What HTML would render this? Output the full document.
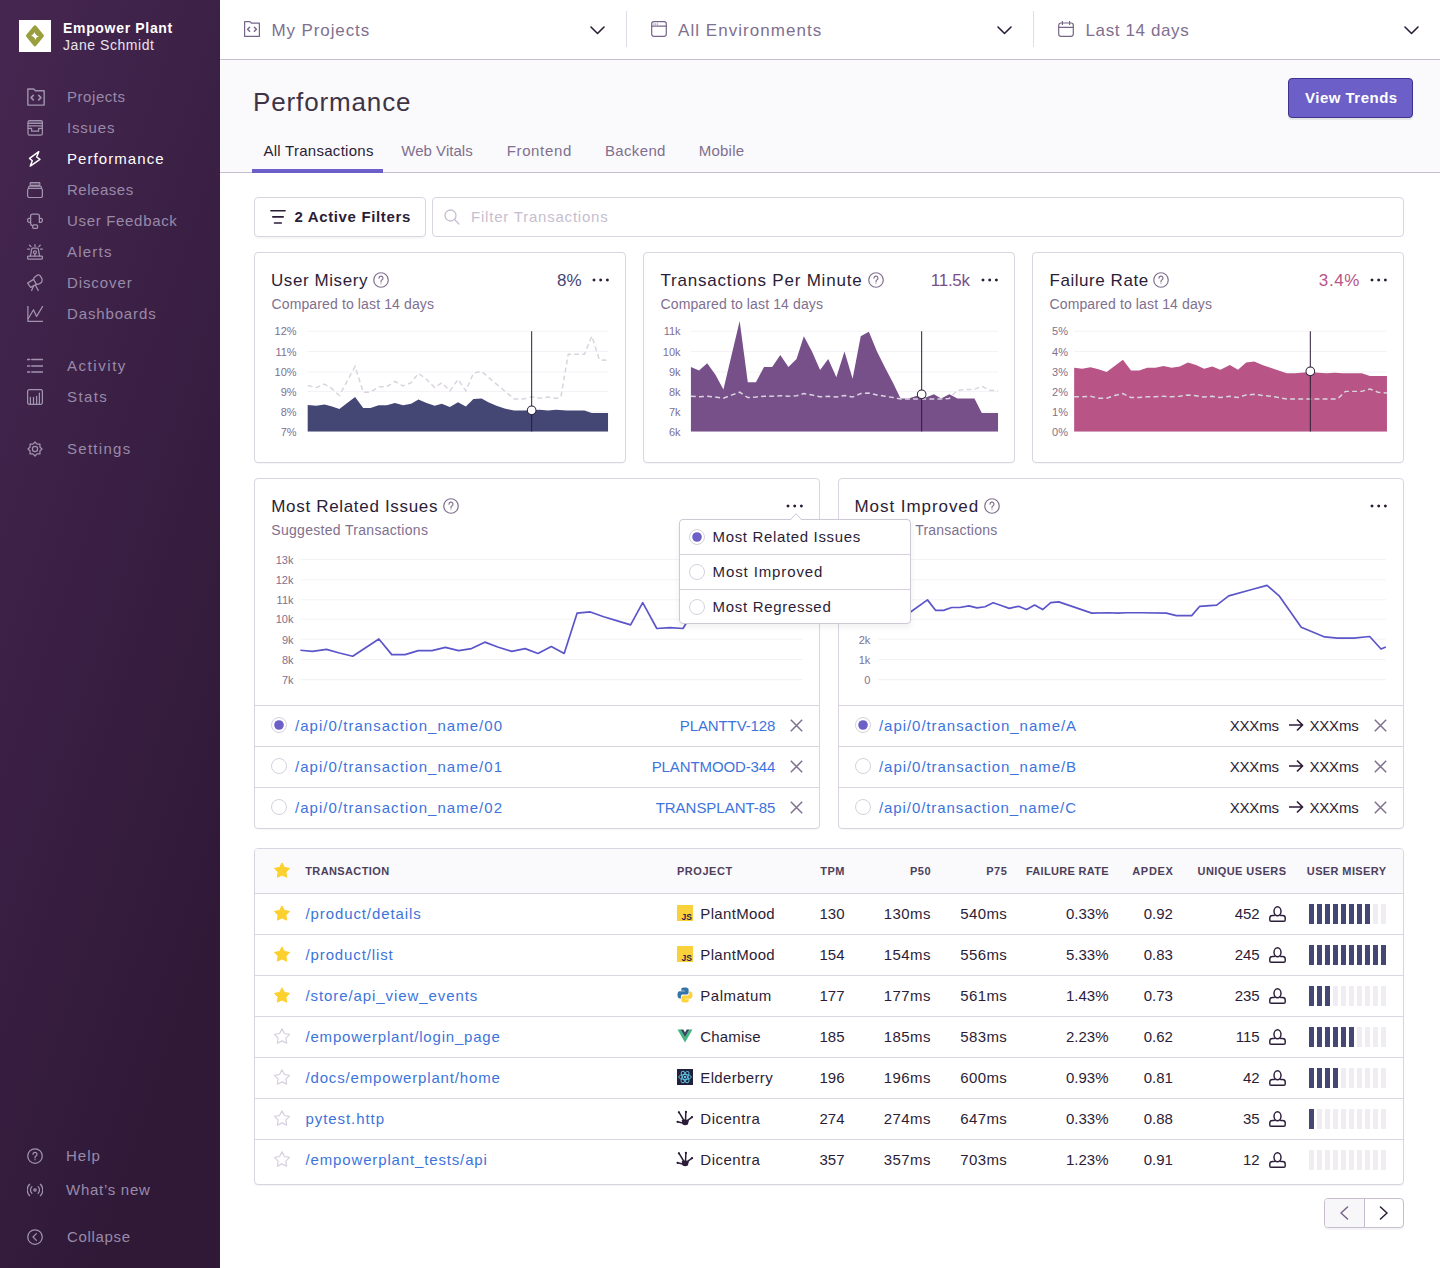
<!DOCTYPE html>
<html><head><meta charset="utf-8"><style>
*{box-sizing:border-box;margin:0;padding:0}
html,body{width:1440px;height:1268px;overflow:hidden;background:#fff;font-family:"Liberation Sans",sans-serif;color:#2b1d38}
.abs{position:absolute}
.t{position:absolute;white-space:nowrap}
</style></head><body>
<div class="abs" style="left:0;top:0;width:220px;height:1268px;background:linear-gradient(288.7deg,#2f1937 17.1%,#452650 98.3%)"></div>
<svg class="abs" style="left:19px;top:20px;width:32px;height:32px" viewBox="0 0 32 32"><rect width="32" height="32" fill="#fff"/><polygon points="15.9,6.9 23.3,15.75 15.9,24.8 8.6,15.75" fill="#9a9e3f" stroke="#9a9e3f" stroke-width="3.2" stroke-linejoin="round"/><path d="M15.5 12Q15.9 14.8 19.9 16.6Q17 17 16.5 20.2Q16 17.4 12.2 15.5Q15 15 15.5 12Z" fill="#fff"/></svg>
<div class="t" style="left:63px;top:19.15px;font-size:14px;line-height:18px;color:#fff;font-weight:bold;letter-spacing:0.678px;">Empower Plant</div>
<div class="t" style="left:63px;top:36.15px;font-size:14px;line-height:18px;color:#e9e2ee;letter-spacing:0.559px;">Jane Schmidt</div>
<div class="t" style="left:67px;top:86.80px;font-size:15px;line-height:20px;color:#998aa9;letter-spacing:0.552px;">Projects</div>
<div class="t" style="left:67px;top:117.80px;font-size:15px;line-height:20px;color:#998aa9;letter-spacing:0.818px;">Issues</div>
<div class="t" style="left:67px;top:148.80px;font-size:15px;line-height:20px;color:#fff;letter-spacing:1.067px;">Performance</div>
<div class="t" style="left:67px;top:179.80px;font-size:15px;line-height:20px;color:#998aa9;letter-spacing:0.515px;">Releases</div>
<div class="t" style="left:67px;top:210.80px;font-size:15px;line-height:20px;color:#998aa9;letter-spacing:0.678px;">User Feedback</div>
<div class="t" style="left:67px;top:241.80px;font-size:15px;line-height:20px;color:#998aa9;letter-spacing:1.221px;">Alerts</div>
<div class="t" style="left:67px;top:272.80px;font-size:15px;line-height:20px;color:#998aa9;letter-spacing:0.899px;">Discover</div>
<div class="t" style="left:67px;top:303.80px;font-size:15px;line-height:20px;color:#998aa9;letter-spacing:0.862px;">Dashboards</div>
<div class="t" style="left:67px;top:355.80px;font-size:15px;line-height:20px;color:#998aa9;letter-spacing:1.548px;">Activity</div>
<div class="t" style="left:67px;top:386.80px;font-size:15px;line-height:20px;color:#998aa9;letter-spacing:1.416px;">Stats</div>
<div class="t" style="left:67px;top:438.80px;font-size:15px;line-height:20px;color:#998aa9;letter-spacing:1.278px;">Settings</div>
<div class="t" style="left:66px;top:1145.80px;font-size:15px;line-height:20px;color:#998aa9;letter-spacing:0.980px;">Help</div>
<div class="t" style="left:66px;top:1179.80px;font-size:15px;line-height:20px;color:#998aa9;letter-spacing:0.726px;">What’s new</div>
<div class="t" style="left:67px;top:1226.80px;font-size:15px;line-height:20px;color:#998aa9;letter-spacing:0.668px;">Collapse</div>
<svg class="abs" style="left:27px;top:88px;width:18px;height:18px" viewBox="0 0 16 16"><path d="M0.75 0.9h5.2l1.6 1.6h7.7v12.7H0.75z" fill="none" stroke="#a194ae" stroke-width="1.25" stroke-linecap="round" stroke-linejoin="round"/><path d="M5.6 6.6L3.6 8.6l2 2M10.4 6.6l2 2-2 2" fill="none" stroke="#a194ae" stroke-width="1.4" stroke-linecap="round" stroke-linejoin="round"/></svg>
<svg class="abs" style="left:27px;top:120px;width:16px;height:16px" viewBox="0 0 16 16"><rect x="1" y="0.6" width="14.4" height="14.6" rx="1.6" fill="none" stroke="#a194ae" stroke-width="1.25" stroke-linecap="round" stroke-linejoin="round"/><rect x="1.6" y="1.2" width="13.2" height="2.2" fill="#a194ae" opacity="0.35"/><path d="M1 3.4h14.4M1 5.9h14.4M1 8.3h3.6v2.9h7V8.3h3.8" fill="none" stroke="#a194ae" stroke-width="1.25" stroke-linecap="round" stroke-linejoin="round"/></svg>
<svg class="abs" style="left:28px;top:151px;width:14px;height:16px" viewBox="0 0 14 16"><path d="M10.76 0.65L1.56 7.4L4.3 9.8L2.25 15.05L11.97 8.3L8.67 6Z" fill="none" stroke="#fff" stroke-width="1.45" stroke-linecap="round" stroke-linejoin="round"/></svg>
<svg class="abs" style="left:27px;top:182px;width:16px;height:16px" viewBox="0 0 16 16"><rect x="3.2" y="0.5" width="9.6" height="3.1" rx="0.8" fill="none" stroke="#a194ae" stroke-width="1.25" stroke-linecap="round" stroke-linejoin="round"/><rect x="3.8" y="1.1" width="8.4" height="1.9" fill="#a194ae" opacity="0.35"/><path d="M1.6 6.3V5.2q0-1.2 1.2-1.2h10.4q1.2 0 1.2 1.2v1.1" fill="none" stroke="#a194ae" stroke-width="1.25" stroke-linecap="round" stroke-linejoin="round"/><rect x="0.6" y="6.3" width="14.8" height="9.2" rx="1.8" fill="none" stroke="#a194ae" stroke-width="1.25" stroke-linecap="round" stroke-linejoin="round"/></svg>
<svg class="abs" style="left:27px;top:213px;width:16px;height:16px" viewBox="0 0 16 16"><path d="M3.6 10.6V3.3Q3.6 1.2 5.7 1.2h4.6q2.1 0 2.1 2.1v6.1" fill="none" stroke="#a194ae" stroke-width="1.25" stroke-linecap="round" stroke-linejoin="round"/><path d="M3.6 5.3H2Q0.6 5.3 0.6 7.3T2 9.4h1.6M12.4 5.3H14q1.4 0 1.4 2T14 9.4h-1.6" fill="none" stroke="#a194ae" stroke-width="1.25" stroke-linecap="round" stroke-linejoin="round"/><path d="M3.6 10.6q0 2 2.1 2" fill="none" stroke="#a194ae" stroke-width="1.25" stroke-linecap="round" stroke-linejoin="round"/><rect x="5.7" y="11.8" width="4.9" height="3.6" rx="1.2" fill="none" stroke="#a194ae" stroke-width="1.25" stroke-linecap="round" stroke-linejoin="round"/></svg>
<svg class="abs" style="left:27px;top:243px;width:16px;height:17px" viewBox="0 0 16 17"><rect x="0.6" y="13" width="14.8" height="3.2" rx="1" fill="none" stroke="#a194ae" stroke-width="1.25" stroke-linecap="round" stroke-linejoin="round"/><path d="M3.4 13L4.7 6.1q0.2-0.9 1.1-0.9h4.4q0.9 0 1.1 0.9L12.6 13" fill="none" stroke="#a194ae" stroke-width="1.25" stroke-linecap="round" stroke-linejoin="round"/><circle cx="7.9" cy="9.3" r="1.5" fill="none" stroke="#a194ae" stroke-width="1.25" stroke-linecap="round" stroke-linejoin="round"/><path d="M7.9 10.8V13M0.6 6H2.5M13.5 6h1.9M2.6 2.2L4 3.6M8 1.5V3.6M13.2 2.2L11.8 3.6" fill="none" stroke="#a194ae" stroke-width="1.25" stroke-linecap="round" stroke-linejoin="round"/></svg>
<svg class="abs" style="left:27px;top:274px;width:16px;height:17px" viewBox="0 0 16 17"><path d="M0.6 9.1L6.5 5.4L9.4 10.4L3.6 13.4Z" fill="none" stroke="#a194ae" stroke-width="1.25" stroke-linecap="round" stroke-linejoin="round"/><path d="M6.5 5.4L7.2 3.6L10.6 1.1Q11.8 0.5 12.8 1.4L14.8 4.4Q15.5 5.8 14.6 8.4L11.6 10.2L9.4 10.4" fill="none" stroke="#a194ae" stroke-width="1.25" stroke-linecap="round" stroke-linejoin="round"/><path d="M6.6 12L4.6 16.4M8.5 11.2L11.2 16.4" fill="none" stroke="#a194ae" stroke-width="1.25" stroke-linecap="round" stroke-linejoin="round"/></svg>
<svg class="abs" style="left:27px;top:306px;width:16px;height:16px" viewBox="0 0 16 16"><path d="M0.9 0.3V15.3H15.7" fill="none" stroke="#a194ae" stroke-width="1.25" stroke-linecap="round" stroke-linejoin="round"/><path d="M1.2 12.8L6.5 3.8L9.6 10.4L15.5 0.5" fill="none" stroke="#a194ae" stroke-width="1.25" stroke-linecap="round" stroke-linejoin="round"/></svg>
<svg class="abs" style="left:27px;top:358px;width:16px;height:16px" viewBox="0 0 16 16"><path d="M4.8 1.6h10.8M4.8 7.9h10.8M4.8 14.1h10.8" fill="none" stroke="#a194ae" stroke-width="1.5" stroke-linecap="round" stroke-linejoin="round"/><path d="M0.5 1.6h2.2M0.5 7.9h2.2M0.5 14.1h2.2" fill="none" stroke="#a194ae" stroke-width="1.5" stroke-linecap="round" stroke-linejoin="round"/></svg>
<svg class="abs" style="left:27px;top:389px;width:16px;height:16px" viewBox="0 0 16 16"><rect x="0.6" y="0.6" width="14.8" height="14.8" rx="1.8" fill="none" stroke="#a194ae" stroke-width="1.25" stroke-linecap="round" stroke-linejoin="round"/><path d="M3.4 15.3V8.3M6.5 15.3V8.3M9.6 15.3V7.3M12.4 15.3V4.2" fill="none" stroke="#a194ae" stroke-width="1.25" stroke-linecap="round" stroke-linejoin="round"/></svg>
<svg class="abs" style="left:27px;top:441px;width:16px;height:16px" viewBox="0 0 16 16"><polygon points="8.00,1.00 10.03,3.10 12.95,3.05 12.90,5.97 15.00,8.00 12.90,10.03 12.95,12.95 10.03,12.90 8.00,15.00 5.97,12.90 3.05,12.95 3.10,10.03 1.00,8.00 3.10,5.97 3.05,3.05 5.97,3.10" fill="none" stroke="#a194ae" stroke-width="1.25" stroke-linecap="round" stroke-linejoin="round"/><circle cx="8" cy="8" r="2.6" fill="none" stroke="#a194ae" stroke-width="1.25" stroke-linecap="round" stroke-linejoin="round"/></svg>
<svg class="abs" style="left:27px;top:1148px;width:16px;height:16px" viewBox="0 0 16 16"><circle cx="8" cy="8" r="7.25" fill="none" stroke="#a194ae" stroke-width="1.25" stroke-linecap="round" stroke-linejoin="round"/><path d="M6 6.3a2 2 0 1 1 2.8 1.8c-.6.3-.8.7-.8 1.3v.5" fill="none" stroke="#a194ae" stroke-width="1.25" stroke-linecap="round" stroke-linejoin="round"/><circle cx="8" cy="11.8" r="0.4" fill="#a194ae" stroke="#a194ae" stroke-width="0.6"/></svg>
<svg class="abs" style="left:27px;top:1182px;width:16px;height:16px" viewBox="0 0 16 16"><circle cx="8" cy="8" r="1.2" fill="none" stroke="#a194ae" stroke-width="1.25" stroke-linecap="round" stroke-linejoin="round"/><path d="M4.9 4.6a4.8 4.8 0 0 0 0 6.8M11.1 4.6a4.8 4.8 0 0 1 0 6.8M2.6 2.3a8 8 0 0 0 0 11.4M13.4 2.3a8 8 0 0 1 0 11.4" fill="none" stroke="#a194ae" stroke-width="1.25" stroke-linecap="round" stroke-linejoin="round"/></svg>
<svg class="abs" style="left:27px;top:1229px;width:16px;height:16px" viewBox="0 0 16 16"><circle cx="8" cy="8" r="7.25" fill="none" stroke="#a194ae" stroke-width="1.25" stroke-linecap="round" stroke-linejoin="round"/><path d="M9.4 4.6L6 8l3.4 3.4" fill="none" stroke="#a194ae" stroke-width="1.25" stroke-linecap="round" stroke-linejoin="round"/></svg>
<div class="abs" style="left:220px;top:0px;width:1220px;height:60px;background:#fff;border-bottom:1px solid #c6becf"></div>
<div class="t" style="left:271.5px;top:19.51px;font-size:17px;line-height:22px;color:#80708f;letter-spacing:0.889px;">My Projects</div>
<div class="t" style="left:678px;top:19.51px;font-size:17px;line-height:22px;color:#80708f;letter-spacing:1.042px;">All Environments</div>
<div class="t" style="left:1085.5px;top:19.51px;font-size:17px;line-height:22px;color:#80708f;letter-spacing:0.617px;">Last 14 days</div>
<svg class="abs" style="left:244px;top:21px;width:16px;height:16px" viewBox="0 0 16 16"><path d="M0.6 0.6h5.3l1.7 1.6h7.8v13.2H0.6z" fill="none" stroke="#776589" stroke-width="1.2" stroke-linecap="round" stroke-linejoin="round"/><path d="M5.6 6.2L3.6 8.2l2 2M10.4 6.2l2 2-2 2" fill="none" stroke="#776589" stroke-width="1.4" stroke-linecap="round" stroke-linejoin="round"/></svg>
<svg class="abs" style="left:651px;top:21px;width:16px;height:16px" viewBox="0 0 16 16"><rect x="0.7" y="0.7" width="14.6" height="14.6" rx="2.2" fill="none" stroke="#776589" stroke-width="1.2" stroke-linecap="round" stroke-linejoin="round"/><path d="M0.7 5.2h14.6" fill="none" stroke="#776589" stroke-width="1.2" stroke-linecap="round" stroke-linejoin="round"/><path d="M2.8 3h.2M4.6 3h.2M6.4 3h.2" fill="none" stroke="#776589" stroke-width="1.1" stroke-linecap="round" stroke-linejoin="round"/></svg>
<svg class="abs" style="left:1058px;top:21px;width:16px;height:16px" viewBox="0 0 16 16"><rect x="0.7" y="2" width="14.6" height="13.3" rx="2.2" fill="none" stroke="#776589" stroke-width="1.2" stroke-linecap="round" stroke-linejoin="round"/><path d="M0.7 6.3h14.6M4.4 0.5v3M11.6 0.5v3" fill="none" stroke="#776589" stroke-width="1.2" stroke-linecap="round" stroke-linejoin="round"/></svg>
<svg class="abs" style="left:590px;top:26px;width:15px;height:9px" viewBox="0 0 15 9"><path d="M1 1l6.5 6.5L14 1" fill="none" stroke="#2b1d38" stroke-width="1.6" stroke-linecap="round" stroke-linejoin="round"/></svg>
<svg class="abs" style="left:997px;top:26px;width:15px;height:9px" viewBox="0 0 15 9"><path d="M1 1l6.5 6.5L14 1" fill="none" stroke="#2b1d38" stroke-width="1.6" stroke-linecap="round" stroke-linejoin="round"/></svg>
<svg class="abs" style="left:1404px;top:26px;width:15px;height:9px" viewBox="0 0 15 9"><path d="M1 1l6.5 6.5L14 1" fill="none" stroke="#2b1d38" stroke-width="1.6" stroke-linecap="round" stroke-linejoin="round"/></svg>
<div class="abs" style="left:626px;top:11px;width:1px;height:36px;background:#e0dce5"></div>
<div class="abs" style="left:1033px;top:11px;width:1px;height:36px;background:#e0dce5"></div>
<div class="abs" style="left:220px;top:60px;width:1220px;height:113px;background:#faf9fb;border-bottom:1px solid #c6becf"></div>
<div class="t" style="left:253px;top:85.19px;font-size:26px;line-height:34px;color:#3e3446;letter-spacing:0.868px;">Performance</div>
<div class="t" style="left:263.4px;top:140.70px;font-size:15px;line-height:20px;color:#2b1d38;letter-spacing:0.277px;">All Transactions</div>
<div class="t" style="left:401.3px;top:140.70px;font-size:15px;line-height:20px;color:#80708f;letter-spacing:0.022px;">Web Vitals</div>
<div class="t" style="left:506.7px;top:140.70px;font-size:15px;line-height:20px;color:#80708f;letter-spacing:0.643px;">Frontend</div>
<div class="t" style="left:604.9px;top:140.70px;font-size:15px;line-height:20px;color:#80708f;letter-spacing:0.362px;">Backend</div>
<div class="t" style="left:698.7px;top:140.70px;font-size:15px;line-height:20px;color:#80708f;letter-spacing:0.252px;">Mobile</div>
<div class="abs" style="left:252px;top:169px;width:131px;height:4px;background:#6c5fc7"></div>
<div class="abs" style="left:1288px;top:78px;width:125px;height:40px;background:#6c5fc7;border:1px solid #3d328e;border-radius:4px;box-shadow:0 2px 0 rgba(0,0,0,.08)"></div>
<div class="t" style="left:1305px;top:87.60px;font-size:15px;line-height:20px;color:#fff;font-weight:bold;letter-spacing:0.488px;">View Trends</div>
<div class="abs" style="left:254px;top:197px;width:172px;height:40px;background:#fff;border:1px solid #d9d4df;border-radius:4px;box-shadow:0 2px 0 rgba(0,0,0,.03)"></div>
<div class="t" style="left:294.5px;top:206.80px;font-size:15px;line-height:20px;color:#2b1d38;font-weight:bold;letter-spacing:0.639px;">2 Active Filters</div>
<div class="abs" style="left:432px;top:197px;width:972px;height:40px;background:#fff;border:1px solid #d9d4df;border-radius:4px"></div>
<div class="t" style="left:471px;top:206.80px;font-size:15px;line-height:20px;color:#c6becf;letter-spacing:0.789px;">Filter Transactions</div>
<svg class="abs" style="left:270px;top:209px;width:16px;height:16px" viewBox="0 0 16 16"><path d="M0.9 1.7h14.2M2.8 7.9h10.4M4.5 14h6.8" fill="none" stroke="#2b1d38" stroke-width="1.6" stroke-linecap="round" stroke-linejoin="round"/></svg>
<svg class="abs" style="left:444px;top:209px;width:16px;height:16px" viewBox="0 0 16 16"><circle cx="6.5" cy="6.5" r="5.5" fill="none" stroke="#c6becf" stroke-width="1.3" stroke-linecap="round" stroke-linejoin="round"/><path d="M10.5 10.5l4.5 4.5" fill="none" stroke="#c6becf" stroke-width="1.3" stroke-linecap="round" stroke-linejoin="round"/></svg>
<div class="abs" style="left:254px;top:252px;width:372px;height:211px;background:#fff;border:1px solid #d9d4df;border-radius:4px;box-shadow:0 1px 0 rgba(0,0,0,.03)"></div>
<div class="abs" style="left:643px;top:252px;width:372px;height:211px;background:#fff;border:1px solid #d9d4df;border-radius:4px;box-shadow:0 1px 0 rgba(0,0,0,.03)"></div>
<div class="abs" style="left:1032px;top:252px;width:372px;height:211px;background:#fff;border:1px solid #d9d4df;border-radius:4px;box-shadow:0 1px 0 rgba(0,0,0,.03)"></div>
<div class="t" style="left:271px;top:269.81px;font-size:17px;line-height:22px;color:#2b1d38;letter-spacing:0.572px;">User Misery</div>
<div class="t" style="left:660.5px;top:269.81px;font-size:17px;line-height:22px;color:#2b1d38;letter-spacing:0.798px;">Transactions Per Minute</div>
<div class="t" style="left:1049.5px;top:269.81px;font-size:17px;line-height:22px;color:#2b1d38;letter-spacing:0.553px;">Failure Rate</div>
<div class="t" style="left:271.5px;top:295.15px;font-size:14px;line-height:18px;color:#80708f;letter-spacing:0.128px;">Compared to last 14 days</div>
<div class="t" style="left:660.5px;top:295.15px;font-size:14px;line-height:18px;color:#80708f;letter-spacing:0.128px;">Compared to last 14 days</div>
<div class="t" style="left:1049.5px;top:295.15px;font-size:14px;line-height:18px;color:#80708f;letter-spacing:0.128px;">Compared to last 14 days</div>
<div class="t" style="left:181.50px;width:400px;text-align:right;top:269.81px;font-size:17px;line-height:22px;color:#444674;">8%</div>
<div class="t" style="left:569.72px;width:400px;text-align:right;top:269.81px;font-size:17px;line-height:22px;color:#77508a;letter-spacing:-0.285px;">11.5k</div>
<div class="t" style="left:960.15px;width:400px;text-align:right;top:269.81px;font-size:17px;line-height:22px;color:#b85586;letter-spacing:0.647px;">3.4%</div>
<svg class="abs" style="left:373px;top:272px;width:16px;height:16px" viewBox="0 0 16 16"><circle cx="8" cy="8" r="7.25" fill="none" stroke="#80708f" stroke-width="1.2" stroke-linecap="round" stroke-linejoin="round"/><path d="M6 6.2a2 2 0 1 1 2.8 1.8c-.6.3-.8.7-.8 1.3v.6" fill="none" stroke="#80708f" stroke-width="1.2" stroke-linecap="round" stroke-linejoin="round"/><circle cx="8" cy="11.8" r="0.5" fill="#80708f"/></svg>
<svg class="abs" style="left:868px;top:272px;width:16px;height:16px" viewBox="0 0 16 16"><circle cx="8" cy="8" r="7.25" fill="none" stroke="#80708f" stroke-width="1.2" stroke-linecap="round" stroke-linejoin="round"/><path d="M6 6.2a2 2 0 1 1 2.8 1.8c-.6.3-.8.7-.8 1.3v.6" fill="none" stroke="#80708f" stroke-width="1.2" stroke-linecap="round" stroke-linejoin="round"/><circle cx="8" cy="11.8" r="0.5" fill="#80708f"/></svg>
<svg class="abs" style="left:1153px;top:272px;width:16px;height:16px" viewBox="0 0 16 16"><circle cx="8" cy="8" r="7.25" fill="none" stroke="#80708f" stroke-width="1.2" stroke-linecap="round" stroke-linejoin="round"/><path d="M6 6.2a2 2 0 1 1 2.8 1.8c-.6.3-.8.7-.8 1.3v.6" fill="none" stroke="#80708f" stroke-width="1.2" stroke-linecap="round" stroke-linejoin="round"/><circle cx="8" cy="11.8" r="0.5" fill="#80708f"/></svg>
<svg class="abs" style="left:592.2px;top:278px;width:17.4px;height:4px" viewBox="0 0 17.4 4"><circle cx="2" cy="2" r="1.5" fill="#2b1d38"/><circle cx="8.7" cy="2" r="1.5" fill="#2b1d38"/><circle cx="15.4" cy="2" r="1.5" fill="#2b1d38"/></svg>
<svg class="abs" style="left:981.2px;top:278px;width:17.4px;height:4px" viewBox="0 0 17.4 4"><circle cx="2" cy="2" r="1.5" fill="#2b1d38"/><circle cx="8.7" cy="2" r="1.5" fill="#2b1d38"/><circle cx="15.4" cy="2" r="1.5" fill="#2b1d38"/></svg>
<svg class="abs" style="left:1370.2px;top:278px;width:17.4px;height:4px" viewBox="0 0 17.4 4"><circle cx="2" cy="2" r="1.5" fill="#2b1d38"/><circle cx="8.7" cy="2" r="1.5" fill="#2b1d38"/><circle cx="15.4" cy="2" r="1.5" fill="#2b1d38"/></svg>
<svg class="abs" style="left:250px;top:250px;width:390px;height:220px" viewBox="0 0 1440 812.3" preserveAspectRatio="none"><line x1="213" y1="300" x2="1322" y2="300" stroke="#f4f2f6" stroke-width="3.7"/><line x1="213" y1="375" x2="1322" y2="375" stroke="#f4f2f6" stroke-width="3.7"/><line x1="213" y1="450" x2="1322" y2="450" stroke="#f4f2f6" stroke-width="3.7"/><line x1="213" y1="522" x2="1322" y2="522" stroke="#f4f2f6" stroke-width="3.7"/><line x1="213" y1="598" x2="1322" y2="598" stroke="#f4f2f6" stroke-width="3.7"/><line x1="213" y1="670" x2="1322" y2="670" stroke="#f4f2f6" stroke-width="3.7"/><polygon points="213,670 213,572 245,575 275,570 300,577 330,587 388,543 418,583 445,583 475,573 505,573 535,565 565,573 595,568 622,552 652,565 682,575 708,568 738,580 768,562 797,578 825,550 855,548 880,562 910,575 940,585 975,593 1010,593 1040,592 1070,590 1100,593 1130,590 1170,593 1200,593 1235,593 1262,602 1322,602 1322,670" fill="#444674"/><polyline points="213,500 245,508 275,495 300,510 330,537 388,430 418,525 445,525 475,505 505,505 535,485 565,502 595,490 622,455 652,478 682,508 708,490 738,520 768,478 797,520 825,455 855,448 880,470 910,495 940,520 975,550 1010,550 1040,542 1070,547 1100,543 1130,548 1148,542 1175,385 1205,385 1235,385 1262,318 1290,405 1322,408" fill="none" stroke="#d9d4de" stroke-width="5.5" stroke-dasharray="18 12"/><line x1="1040" y1="300" x2="1040" y2="670" stroke="#2b1d38" stroke-width="3.7"/><circle cx="1040" cy="592" r="16" fill="#fff" stroke="#2b1d38" stroke-width="3.7"/></svg>
<div class="t" style="left:-103.40px;width:400px;text-align:right;top:324.44px;font-size:11px;line-height:14px;color:#80708f;">12%</div>
<div class="t" style="left:-103.40px;width:400px;text-align:right;top:344.75px;font-size:11px;line-height:14px;color:#80708f;">11%</div>
<div class="t" style="left:-103.40px;width:400px;text-align:right;top:365.06px;font-size:11px;line-height:14px;color:#80708f;">10%</div>
<div class="t" style="left:-103.40px;width:400px;text-align:right;top:384.56px;font-size:11px;line-height:14px;color:#80708f;">9%</div>
<div class="t" style="left:-103.40px;width:400px;text-align:right;top:405.15px;font-size:11px;line-height:14px;color:#80708f;">8%</div>
<div class="t" style="left:-103.40px;width:400px;text-align:right;top:424.65px;font-size:11px;line-height:14px;color:#80708f;">7%</div>
<svg class="abs" style="left:640px;top:250px;width:390px;height:220px" viewBox="0 0 1440 812.3" preserveAspectRatio="none"><line x1="188" y1="300" x2="1322" y2="300" stroke="#f4f2f6" stroke-width="3.7"/><line x1="188" y1="375" x2="1322" y2="375" stroke="#f4f2f6" stroke-width="3.7"/><line x1="188" y1="450" x2="1322" y2="450" stroke="#f4f2f6" stroke-width="3.7"/><line x1="188" y1="522" x2="1322" y2="522" stroke="#f4f2f6" stroke-width="3.7"/><line x1="188" y1="598" x2="1322" y2="598" stroke="#f4f2f6" stroke-width="3.7"/><line x1="188" y1="670" x2="1322" y2="670" stroke="#f4f2f6" stroke-width="3.7"/><polygon points="188,670 188,432 218,445 248,418 278,460 308,515 368,262 398,488 428,488 458,432 488,432 518,388 548,432 578,402 605,318 635,375 665,443 695,402 725,470 755,375 785,475 815,318 845,302 875,375 905,435 935,492 962,548 992,548 1022,538 1040,533 1055,545 1085,533 1112,548 1142,533 1172,548 1235,548 1262,602 1322,602 1322,670" fill="#77508a"/><polyline points="188,540 218,542 248,540 278,543 308,547 340,535 368,525 398,545 428,543 458,540 488,540 518,538 548,540 578,538 605,530 635,535 665,542 695,540 725,543 755,537 785,543 815,530 845,528 875,535 905,540 935,545 962,550 992,550 1040,550 1085,550 1112,550 1142,548 1172,518 1205,515 1235,515 1262,503 1290,518 1322,520" fill="none" stroke="#d9d4de" stroke-width="5.5" stroke-dasharray="18 12"/><line x1="1040" y1="300" x2="1040" y2="670" stroke="#2b1d38" stroke-width="3.7"/><circle cx="1040" cy="533" r="16" fill="#fff" stroke="#2b1d38" stroke-width="3.7"/></svg>
<div class="t" style="left:280.60px;width:400px;text-align:right;top:324.44px;font-size:11px;line-height:14px;color:#80708f;">11k</div>
<div class="t" style="left:280.60px;width:400px;text-align:right;top:344.75px;font-size:11px;line-height:14px;color:#80708f;">10k</div>
<div class="t" style="left:280.60px;width:400px;text-align:right;top:365.06px;font-size:11px;line-height:14px;color:#80708f;">9k</div>
<div class="t" style="left:280.60px;width:400px;text-align:right;top:384.56px;font-size:11px;line-height:14px;color:#80708f;">8k</div>
<div class="t" style="left:280.60px;width:400px;text-align:right;top:405.15px;font-size:11px;line-height:14px;color:#80708f;">7k</div>
<div class="t" style="left:280.60px;width:400px;text-align:right;top:424.65px;font-size:11px;line-height:14px;color:#80708f;">6k</div>
<svg class="abs" style="left:1030px;top:250px;width:390px;height:220px" viewBox="0 0 1440 812.3" preserveAspectRatio="none"><line x1="163" y1="300" x2="1318" y2="300" stroke="#f4f2f6" stroke-width="3.7"/><line x1="163" y1="375" x2="1318" y2="375" stroke="#f4f2f6" stroke-width="3.7"/><line x1="163" y1="450" x2="1318" y2="450" stroke="#f4f2f6" stroke-width="3.7"/><line x1="163" y1="522" x2="1318" y2="522" stroke="#f4f2f6" stroke-width="3.7"/><line x1="163" y1="598" x2="1318" y2="598" stroke="#f4f2f6" stroke-width="3.7"/><line x1="163" y1="670" x2="1318" y2="670" stroke="#f4f2f6" stroke-width="3.7"/><polygon points="163,670 163,435 193,438 223,433 253,440 283,450 343,405 373,445 403,445 433,435 463,435 493,428 523,435 553,430 583,415 613,425 643,438 673,430 703,442 738,425 768,442 798,415 828,412 858,425 888,435 918,445 948,455 978,455 1035,450 1065,453 1095,455 1125,453 1155,455 1225,455 1255,465 1318,465 1318,670" fill="#b85586"/><polyline points="163,542 193,542 223,540 253,547 283,547 313,537 343,530 373,545 403,545 433,542 463,542 493,540 523,542 553,540 583,535 613,538 643,543 673,540 703,545 738,540 768,545 798,535 828,533 858,537 888,540 918,545 948,550 1035,550 1095,550 1135,550 1165,522 1195,522 1225,522 1255,513 1285,525 1318,528" fill="none" stroke="#d9d4de" stroke-width="5.5" stroke-dasharray="18 12"/><line x1="1035" y1="300" x2="1035" y2="670" stroke="#2b1d38" stroke-width="3.7"/><circle cx="1035" cy="448" r="16" fill="#fff" stroke="#2b1d38" stroke-width="3.7"/></svg>
<div class="t" style="left:668.00px;width:400px;text-align:right;top:324.44px;font-size:11px;line-height:14px;color:#80708f;">5%</div>
<div class="t" style="left:668.00px;width:400px;text-align:right;top:344.75px;font-size:11px;line-height:14px;color:#80708f;">4%</div>
<div class="t" style="left:668.00px;width:400px;text-align:right;top:365.06px;font-size:11px;line-height:14px;color:#80708f;">3%</div>
<div class="t" style="left:668.00px;width:400px;text-align:right;top:384.56px;font-size:11px;line-height:14px;color:#80708f;">2%</div>
<div class="t" style="left:668.00px;width:400px;text-align:right;top:405.15px;font-size:11px;line-height:14px;color:#80708f;">1%</div>
<div class="t" style="left:668.00px;width:400px;text-align:right;top:424.65px;font-size:11px;line-height:14px;color:#80708f;">0%</div>
<div class="abs" style="left:254px;top:478px;width:566px;height:351px;background:#fff;border:1px solid #d9d4df;border-radius:4px;box-shadow:0 1px 0 rgba(0,0,0,.03)"></div>
<div class="abs" style="left:838px;top:478px;width:566px;height:351px;background:#fff;border:1px solid #d9d4df;border-radius:4px;box-shadow:0 1px 0 rgba(0,0,0,.03)"></div>
<div class="t" style="left:271.25px;top:496.31px;font-size:17px;line-height:22px;color:#2b1d38;letter-spacing:0.676px;">Most Related Issues</div>
<div class="t" style="left:271.25px;top:521.15px;font-size:14px;line-height:18px;color:#80708f;letter-spacing:0.308px;">Suggested Transactions</div>
<div class="t" style="left:854.5px;top:496.31px;font-size:17px;line-height:22px;color:#2b1d38;letter-spacing:0.938px;">Most Improved</div>
<div class="t" style="left:855px;top:521.15px;font-size:14px;line-height:18px;color:#80708f;letter-spacing:0.209px;">Trending Transactions</div>
<svg class="abs" style="left:443px;top:498px;width:16px;height:16px" viewBox="0 0 16 16"><circle cx="8" cy="8" r="7.25" fill="none" stroke="#80708f" stroke-width="1.2" stroke-linecap="round" stroke-linejoin="round"/><path d="M6 6.2a2 2 0 1 1 2.8 1.8c-.6.3-.8.7-.8 1.3v.6" fill="none" stroke="#80708f" stroke-width="1.2" stroke-linecap="round" stroke-linejoin="round"/><circle cx="8" cy="11.8" r="0.5" fill="#80708f"/></svg>
<svg class="abs" style="left:984px;top:498px;width:16px;height:16px" viewBox="0 0 16 16"><circle cx="8" cy="8" r="7.25" fill="none" stroke="#80708f" stroke-width="1.2" stroke-linecap="round" stroke-linejoin="round"/><path d="M6 6.2a2 2 0 1 1 2.8 1.8c-.6.3-.8.7-.8 1.3v.6" fill="none" stroke="#80708f" stroke-width="1.2" stroke-linecap="round" stroke-linejoin="round"/><circle cx="8" cy="11.8" r="0.5" fill="#80708f"/></svg>
<svg class="abs" style="left:786.2px;top:504px;width:17.4px;height:4px" viewBox="0 0 17.4 4"><circle cx="2" cy="2" r="1.5" fill="#2b1d38"/><circle cx="8.7" cy="2" r="1.5" fill="#2b1d38"/><circle cx="15.4" cy="2" r="1.5" fill="#2b1d38"/></svg>
<svg class="abs" style="left:1370.2px;top:504px;width:17.4px;height:4px" viewBox="0 0 17.4 4"><circle cx="2" cy="2" r="1.5" fill="#2b1d38"/><circle cx="8.7" cy="2" r="1.5" fill="#2b1d38"/><circle cx="15.4" cy="2" r="1.5" fill="#2b1d38"/></svg>
<svg class="abs" style="left:250px;top:475px;width:580px;height:235px" viewBox="0 0 1440 583.4" preserveAspectRatio="none"><line x1="125" y1="210" x2="1372" y2="210" stroke="#f4f2f6" stroke-width="2.5"/><line x1="125" y1="260" x2="1372" y2="260" stroke="#f4f2f6" stroke-width="2.5"/><line x1="125" y1="310" x2="1372" y2="310" stroke="#f4f2f6" stroke-width="2.5"/><line x1="125" y1="358" x2="1372" y2="358" stroke="#f4f2f6" stroke-width="2.5"/><line x1="125" y1="408" x2="1372" y2="408" stroke="#f4f2f6" stroke-width="2.5"/><line x1="125" y1="458" x2="1372" y2="458" stroke="#f4f2f6" stroke-width="2.5"/><line x1="125" y1="508" x2="1372" y2="508" stroke="#f4f2f6" stroke-width="2.5"/><polyline points="125,435 155,438 190,433 222,442 255,450 320,407 352,446 385,446 418,436 452,436 485,428 518,436 550,431 583,415 615,427 650,438 683,431 715,443 748,426 780,443 812,343 845,340 878,352 912,362 945,372 975,317 1010,381 1043,379 1075,381 1100,340 1140,330" fill="none" stroke="#5b55c9" stroke-width="4.2" stroke-linejoin="round"/></svg>
<div class="t" style="left:-106.50px;width:400px;text-align:right;top:552.77px;font-size:11px;line-height:14px;color:#80708f;">13k</div>
<div class="t" style="left:-106.50px;width:400px;text-align:right;top:572.91px;font-size:11px;line-height:14px;color:#80708f;">12k</div>
<div class="t" style="left:-106.50px;width:400px;text-align:right;top:593.05px;font-size:11px;line-height:14px;color:#80708f;">11k</div>
<div class="t" style="left:-106.50px;width:400px;text-align:right;top:612.38px;font-size:11px;line-height:14px;color:#80708f;">10k</div>
<div class="t" style="left:-106.50px;width:400px;text-align:right;top:632.52px;font-size:11px;line-height:14px;color:#80708f;">9k</div>
<div class="t" style="left:-106.50px;width:400px;text-align:right;top:652.66px;font-size:11px;line-height:14px;color:#80708f;">8k</div>
<div class="t" style="left:-106.50px;width:400px;text-align:right;top:672.80px;font-size:11px;line-height:14px;color:#80708f;">7k</div>
<svg class="abs" style="left:830px;top:475px;width:580px;height:235px" viewBox="0 0 1440 583.4" preserveAspectRatio="none"><line x1="120" y1="210" x2="1380" y2="210" stroke="#f4f2f6" stroke-width="2.5"/><line x1="120" y1="260" x2="1380" y2="260" stroke="#f4f2f6" stroke-width="2.5"/><line x1="120" y1="310" x2="1380" y2="310" stroke="#f4f2f6" stroke-width="2.5"/><line x1="120" y1="358" x2="1380" y2="358" stroke="#f4f2f6" stroke-width="2.5"/><line x1="120" y1="408" x2="1380" y2="408" stroke="#f4f2f6" stroke-width="2.5"/><line x1="120" y1="458" x2="1380" y2="458" stroke="#f4f2f6" stroke-width="2.5"/><line x1="120" y1="508" x2="1380" y2="508" stroke="#f4f2f6" stroke-width="2.5"/><polyline points="120,330 160,320 200,340 242,310 262,336 282,336 302,329 322,329 345,325 365,330 385,327 405,317 425,324 445,331 468,326 488,334 508,323 528,334 548,317 568,315 650,343 692,342 715,343 735,342 775,342 835,343 860,349 898,349 918,326 960,323 990,300 1045,285 1085,274 1115,300 1170,378 1228,402 1260,405 1300,405 1340,401 1368,432 1380,427" fill="none" stroke="#5b55c9" stroke-width="4.2" stroke-linejoin="round"/></svg>
<div class="t" style="left:470.30px;width:400px;text-align:right;top:552.77px;font-size:11px;line-height:14px;color:#80708f;">6k</div>
<div class="t" style="left:470.30px;width:400px;text-align:right;top:572.91px;font-size:11px;line-height:14px;color:#80708f;">5k</div>
<div class="t" style="left:470.30px;width:400px;text-align:right;top:593.05px;font-size:11px;line-height:14px;color:#80708f;">4k</div>
<div class="t" style="left:470.30px;width:400px;text-align:right;top:612.38px;font-size:11px;line-height:14px;color:#80708f;">3k</div>
<div class="t" style="left:470.30px;width:400px;text-align:right;top:632.52px;font-size:11px;line-height:14px;color:#80708f;">2k</div>
<div class="t" style="left:470.30px;width:400px;text-align:right;top:652.66px;font-size:11px;line-height:14px;color:#80708f;">1k</div>
<div class="t" style="left:470.30px;width:400px;text-align:right;top:672.80px;font-size:11px;line-height:14px;color:#80708f;">0</div>
<div class="abs" style="left:255px;top:705px;width:564px;height:1px;background:#d9d4df"></div>
<svg class="abs" style="left:271px;top:717px;width:16px;height:16px" viewBox="0 0 16 16"><circle cx="8" cy="8" r="7.5" fill="#fff" stroke="#d6d0dc" stroke-width="1"/><circle cx="8" cy="8" r="4.8" fill="#6c5fc7"/></svg>
<div class="t" style="left:295px;top:716.00px;font-size:15px;line-height:20px;color:#3d74db;letter-spacing:1.044px;">/api/0/transaction_name/00</div>
<div class="t" style="left:375.28px;width:400px;text-align:right;top:716.00px;font-size:15px;line-height:20px;color:#3d74db;letter-spacing:-0.117px;">PLANTTV-128</div>
<svg class="abs" style="left:789.5px;top:718.5px;width:13px;height:13px" viewBox="0 0 13 13"><path d="M0.8 0.8L12.2 12.2M12.2 0.8L0.8 12.2" stroke="#80708f" stroke-width="1.5" fill="none"/></svg>
<div class="abs" style="left:255px;top:746px;width:564px;height:1px;background:#d9d4df"></div>
<svg class="abs" style="left:271px;top:758px;width:16px;height:16px" viewBox="0 0 16 16"><circle cx="8" cy="8" r="7.5" fill="#fff" stroke="#d6d0dc" stroke-width="1"/></svg>
<div class="t" style="left:295px;top:757.00px;font-size:15px;line-height:20px;color:#3d74db;letter-spacing:1.044px;">/api/0/transaction_name/01</div>
<div class="t" style="left:375.28px;width:400px;text-align:right;top:757.00px;font-size:15px;line-height:20px;color:#3d74db;letter-spacing:-0.116px;">PLANTMOOD-344</div>
<svg class="abs" style="left:789.5px;top:759.5px;width:13px;height:13px" viewBox="0 0 13 13"><path d="M0.8 0.8L12.2 12.2M12.2 0.8L0.8 12.2" stroke="#80708f" stroke-width="1.5" fill="none"/></svg>
<div class="abs" style="left:255px;top:787px;width:564px;height:1px;background:#d9d4df"></div>
<svg class="abs" style="left:271px;top:799px;width:16px;height:16px" viewBox="0 0 16 16"><circle cx="8" cy="8" r="7.5" fill="#fff" stroke="#d6d0dc" stroke-width="1"/></svg>
<div class="t" style="left:295px;top:798.00px;font-size:15px;line-height:20px;color:#3d74db;letter-spacing:1.044px;">/api/0/transaction_name/02</div>
<div class="t" style="left:375.38px;width:400px;text-align:right;top:798.00px;font-size:15px;line-height:20px;color:#3d74db;letter-spacing:-0.025px;">TRANSPLANT-85</div>
<svg class="abs" style="left:789.5px;top:800.5px;width:13px;height:13px" viewBox="0 0 13 13"><path d="M0.8 0.8L12.2 12.2M12.2 0.8L0.8 12.2" stroke="#80708f" stroke-width="1.5" fill="none"/></svg>
<div class="abs" style="left:839px;top:705px;width:564px;height:1px;background:#d9d4df"></div>
<svg class="abs" style="left:855px;top:717px;width:16px;height:16px" viewBox="0 0 16 16"><circle cx="8" cy="8" r="7.5" fill="#fff" stroke="#d6d0dc" stroke-width="1"/><circle cx="8" cy="8" r="4.8" fill="#6c5fc7"/></svg>
<div class="t" style="left:879px;top:716.00px;font-size:15px;line-height:20px;color:#3d74db;letter-spacing:0.949px;">/api/0/transaction_name/A</div>
<div class="t" style="left:878.83px;width:400px;text-align:right;top:716.00px;font-size:15px;line-height:20px;color:#2b1d38;letter-spacing:-0.166px;">XXXms</div>
<svg class="abs" style="left:1288px;top:718px;width:16px;height:14px" viewBox="0 0 16 14"><path d="M1 7H14.5M9 1.5L14.5 7L9 12.5" stroke="#2b1d38" stroke-width="1.6" fill="none"/></svg>
<div class="t" style="left:958.63px;width:400px;text-align:right;top:716.00px;font-size:15px;line-height:20px;color:#2b1d38;letter-spacing:-0.166px;">XXXms</div>
<svg class="abs" style="left:1373.5px;top:718.5px;width:13px;height:13px" viewBox="0 0 13 13"><path d="M0.8 0.8L12.2 12.2M12.2 0.8L0.8 12.2" stroke="#80708f" stroke-width="1.5" fill="none"/></svg>
<div class="abs" style="left:839px;top:746px;width:564px;height:1px;background:#d9d4df"></div>
<svg class="abs" style="left:855px;top:758px;width:16px;height:16px" viewBox="0 0 16 16"><circle cx="8" cy="8" r="7.5" fill="#fff" stroke="#d6d0dc" stroke-width="1"/></svg>
<div class="t" style="left:879px;top:757.00px;font-size:15px;line-height:20px;color:#3d74db;letter-spacing:0.949px;">/api/0/transaction_name/B</div>
<div class="t" style="left:878.83px;width:400px;text-align:right;top:757.00px;font-size:15px;line-height:20px;color:#2b1d38;letter-spacing:-0.166px;">XXXms</div>
<svg class="abs" style="left:1288px;top:759px;width:16px;height:14px" viewBox="0 0 16 14"><path d="M1 7H14.5M9 1.5L14.5 7L9 12.5" stroke="#2b1d38" stroke-width="1.6" fill="none"/></svg>
<div class="t" style="left:958.63px;width:400px;text-align:right;top:757.00px;font-size:15px;line-height:20px;color:#2b1d38;letter-spacing:-0.166px;">XXXms</div>
<svg class="abs" style="left:1373.5px;top:759.5px;width:13px;height:13px" viewBox="0 0 13 13"><path d="M0.8 0.8L12.2 12.2M12.2 0.8L0.8 12.2" stroke="#80708f" stroke-width="1.5" fill="none"/></svg>
<div class="abs" style="left:839px;top:787px;width:564px;height:1px;background:#d9d4df"></div>
<svg class="abs" style="left:855px;top:799px;width:16px;height:16px" viewBox="0 0 16 16"><circle cx="8" cy="8" r="7.5" fill="#fff" stroke="#d6d0dc" stroke-width="1"/></svg>
<div class="t" style="left:879px;top:798.00px;font-size:15px;line-height:20px;color:#3d74db;letter-spacing:0.914px;">/api/0/transaction_name/C</div>
<div class="t" style="left:878.83px;width:400px;text-align:right;top:798.00px;font-size:15px;line-height:20px;color:#2b1d38;letter-spacing:-0.166px;">XXXms</div>
<svg class="abs" style="left:1288px;top:800px;width:16px;height:14px" viewBox="0 0 16 14"><path d="M1 7H14.5M9 1.5L14.5 7L9 12.5" stroke="#2b1d38" stroke-width="1.6" fill="none"/></svg>
<div class="t" style="left:958.63px;width:400px;text-align:right;top:798.00px;font-size:15px;line-height:20px;color:#2b1d38;letter-spacing:-0.166px;">XXXms</div>
<svg class="abs" style="left:1373.5px;top:800.5px;width:13px;height:13px" viewBox="0 0 13 13"><path d="M0.8 0.8L12.2 12.2M12.2 0.8L0.8 12.2" stroke="#80708f" stroke-width="1.5" fill="none"/></svg>
<div class="abs" style="left:679px;top:519px;width:232px;height:105px;background:#fff;border:1px solid #cfc8d6;border-radius:4px;box-shadow:0 3px 6px rgba(43,29,56,.07)"></div>
<svg class="abs" style="left:789.5px;top:512.6px;width:12px;height:7px" viewBox="0 0 12 7"><path d="M0.3 6.9L6 0.6L11.7 6.9" fill="#fff" stroke="#cfc8d6" stroke-width="1"/></svg>
<div class="abs" style="left:680px;top:554px;width:230px;height:1px;background:#d6d0dc"></div>
<div class="abs" style="left:680px;top:589px;width:230px;height:1px;background:#d6d0dc"></div>
<div class="t" style="left:712.5px;top:526.50px;font-size:15px;line-height:20px;color:#2b1d38;letter-spacing:0.658px;">Most Related Issues</div>
<div class="t" style="left:712.5px;top:561.50px;font-size:15px;line-height:20px;color:#2b1d38;letter-spacing:0.896px;">Most Improved</div>
<div class="t" style="left:712.5px;top:596.50px;font-size:15px;line-height:20px;color:#2b1d38;letter-spacing:0.695px;">Most Regressed</div>
<svg class="abs" style="left:689px;top:529px;width:16px;height:16px" viewBox="0 0 16 16"><circle cx="8" cy="8" r="7.5" fill="#fff" stroke="#d6d0dc" stroke-width="1"/><circle cx="8" cy="8" r="4.8" fill="#6c5fc7"/></svg>
<svg class="abs" style="left:689px;top:564px;width:16px;height:16px" viewBox="0 0 16 16"><circle cx="8" cy="8" r="7.5" fill="#fff" stroke="#d6d0dc" stroke-width="1"/></svg>
<svg class="abs" style="left:689px;top:599px;width:16px;height:16px" viewBox="0 0 16 16"><circle cx="8" cy="8" r="7.5" fill="#fff" stroke="#d6d0dc" stroke-width="1"/></svg>
<div class="abs" style="left:254px;top:848px;width:1150px;height:337px;border:1px solid #d9d4df;border-radius:4px;background:#fff;overflow:hidden;box-shadow:0 1px 0 rgba(0,0,0,.04)"><div class="abs" style="left:0;top:0;width:1148px;height:45px;background:#faf9fb;border-bottom:1px solid #d9d4df"></div></div>
<div class="t" style="left:305.2px;top:864.39px;font-size:11px;line-height:14px;color:#4d3f5c;font-weight:bold;letter-spacing:0.391px;">TRANSACTION</div>
<div class="t" style="left:677px;top:864.39px;font-size:11px;line-height:14px;color:#4d3f5c;font-weight:bold;letter-spacing:0.534px;">PROJECT</div>
<div class="t" style="left:445.00px;width:400px;text-align:right;top:864.39px;font-size:11px;line-height:14px;color:#4d3f5c;font-weight:bold;letter-spacing:0.500px;">TPM</div>
<div class="t" style="left:531.00px;width:400px;text-align:right;top:864.39px;font-size:11px;line-height:14px;color:#4d3f5c;font-weight:bold;letter-spacing:0.500px;">P50</div>
<div class="t" style="left:607.30px;width:400px;text-align:right;top:864.39px;font-size:11px;line-height:14px;color:#4d3f5c;font-weight:bold;letter-spacing:0.500px;">P75</div>
<div class="t" style="left:708.80px;width:400px;text-align:right;top:864.39px;font-size:11px;line-height:14px;color:#4d3f5c;font-weight:bold;letter-spacing:0.302px;">FAILURE RATE</div>
<div class="t" style="left:773.59px;width:400px;text-align:right;top:864.39px;font-size:11px;line-height:14px;color:#4d3f5c;font-weight:bold;letter-spacing:0.691px;">APDEX</div>
<div class="t" style="left:886.43px;width:400px;text-align:right;top:864.39px;font-size:11px;line-height:14px;color:#4d3f5c;font-weight:bold;letter-spacing:0.429px;">UNIQUE USERS</div>
<div class="t" style="left:986.38px;width:400px;text-align:right;top:864.39px;font-size:11px;line-height:14px;color:#4d3f5c;font-weight:bold;letter-spacing:0.378px;">USER MISERY</div>
<svg class="abs" style="left:274px;top:862px;width:16px;height:16px" viewBox="0 0 16 16"><polygon points="8.00,0.90 10.41,5.48 15.51,6.36 11.90,10.07 12.64,15.19 8.00,12.90 3.36,15.19 4.10,10.07 0.49,6.36 5.59,5.48" fill="#fcd02e" stroke="#fcd02e" stroke-width="1" stroke-linejoin="round"/></svg>
<svg class="abs" style="left:274px;top:905px;width:16px;height:16px" viewBox="0 0 16 16"><polygon points="8.00,0.90 10.41,5.48 15.51,6.36 11.90,10.07 12.64,15.19 8.00,12.90 3.36,15.19 4.10,10.07 0.49,6.36 5.59,5.48" fill="#fcd02e" stroke="#fcd02e" stroke-width="1" stroke-linejoin="round"/></svg>
<div class="t" style="left:305.5px;top:903.80px;font-size:15px;line-height:20px;color:#3d74db;letter-spacing:0.894px;">/product/details</div>
<svg class="abs" style="left:677px;top:905px;width:16px;height:16px" viewBox="0 0 16 16"><rect width="16" height="16" fill="#f9d13b"/><text x="15" y="14.6" text-anchor="end" font-family="Liberation Sans" font-weight="bold" font-size="8.5" fill="#261e4b">JS</text></svg>
<div class="t" style="left:700.3px;top:903.80px;font-size:15px;line-height:20px;color:#2b1d38;letter-spacing:0.329px;">PlantMood</div>
<div class="t" style="left:444.50px;width:400px;text-align:right;top:903.80px;font-size:15px;line-height:20px;color:#2b1d38;">130</div>
<div class="t" style="left:530.90px;width:400px;text-align:right;top:903.80px;font-size:15px;line-height:20px;color:#2b1d38;letter-spacing:0.400px;">130ms</div>
<div class="t" style="left:607.20px;width:400px;text-align:right;top:903.80px;font-size:15px;line-height:20px;color:#2b1d38;letter-spacing:0.400px;">540ms</div>
<div class="t" style="left:708.50px;width:400px;text-align:right;top:903.80px;font-size:15px;line-height:20px;color:#2b1d38;">0.33%</div>
<div class="t" style="left:772.90px;width:400px;text-align:right;top:903.80px;font-size:15px;line-height:20px;color:#2b1d38;">0.92</div>
<div class="t" style="left:859.70px;width:400px;text-align:right;top:903.80px;font-size:15px;line-height:20px;color:#2b1d38;">452</div>
<svg class="abs" style="left:1269px;top:905px;width:17px;height:17px" viewBox="0 0 17 17"><ellipse cx="8.5" cy="6.3" rx="3.5" ry="4.5" fill="none" stroke="#2b1d38" stroke-width="1.45" stroke-linecap="round" stroke-linejoin="round"/><path d="M5.3 10.4H3.4Q0.8 10.4 0.8 13v1.9q0 1.3 1.3 1.3h12.8q1.3 0 1.3-1.3V13q0-2.6-2.6-2.6h-1.9" fill="none" stroke="#2b1d38" stroke-width="1.45" stroke-linecap="round" stroke-linejoin="round"/></svg>
<div class="abs" style="left:1309px;top:904px;width:5px;height:20px;background:#444674"></div>
<div class="abs" style="left:1317px;top:904px;width:5px;height:20px;background:#444674"></div>
<div class="abs" style="left:1325px;top:904px;width:5px;height:20px;background:#444674"></div>
<div class="abs" style="left:1333px;top:904px;width:5px;height:20px;background:#444674"></div>
<div class="abs" style="left:1341px;top:904px;width:5px;height:20px;background:#444674"></div>
<div class="abs" style="left:1349px;top:904px;width:5px;height:20px;background:#444674"></div>
<div class="abs" style="left:1357px;top:904px;width:5px;height:20px;background:#444674"></div>
<div class="abs" style="left:1365px;top:904px;width:5px;height:20px;background:#444674"></div>
<div class="abs" style="left:1373px;top:904px;width:5px;height:20px;background:#efedf2"></div>
<div class="abs" style="left:1381px;top:904px;width:5px;height:20px;background:#efedf2"></div>
<div class="abs" style="left:255px;top:934px;width:1148px;height:1px;background:#dcd7e2"></div>
<svg class="abs" style="left:274px;top:946px;width:16px;height:16px" viewBox="0 0 16 16"><polygon points="8.00,0.90 10.41,5.48 15.51,6.36 11.90,10.07 12.64,15.19 8.00,12.90 3.36,15.19 4.10,10.07 0.49,6.36 5.59,5.48" fill="#fcd02e" stroke="#fcd02e" stroke-width="1" stroke-linejoin="round"/></svg>
<div class="t" style="left:305.5px;top:944.80px;font-size:15px;line-height:20px;color:#3d74db;letter-spacing:0.880px;">/product/list</div>
<svg class="abs" style="left:677px;top:946px;width:16px;height:16px" viewBox="0 0 16 16"><rect width="16" height="16" fill="#f9d13b"/><text x="15" y="14.6" text-anchor="end" font-family="Liberation Sans" font-weight="bold" font-size="8.5" fill="#261e4b">JS</text></svg>
<div class="t" style="left:700.3px;top:944.80px;font-size:15px;line-height:20px;color:#2b1d38;letter-spacing:0.329px;">PlantMood</div>
<div class="t" style="left:444.50px;width:400px;text-align:right;top:944.80px;font-size:15px;line-height:20px;color:#2b1d38;">154</div>
<div class="t" style="left:530.90px;width:400px;text-align:right;top:944.80px;font-size:15px;line-height:20px;color:#2b1d38;letter-spacing:0.400px;">154ms</div>
<div class="t" style="left:607.20px;width:400px;text-align:right;top:944.80px;font-size:15px;line-height:20px;color:#2b1d38;letter-spacing:0.400px;">556ms</div>
<div class="t" style="left:708.50px;width:400px;text-align:right;top:944.80px;font-size:15px;line-height:20px;color:#2b1d38;">5.33%</div>
<div class="t" style="left:772.90px;width:400px;text-align:right;top:944.80px;font-size:15px;line-height:20px;color:#2b1d38;">0.83</div>
<div class="t" style="left:859.70px;width:400px;text-align:right;top:944.80px;font-size:15px;line-height:20px;color:#2b1d38;">245</div>
<svg class="abs" style="left:1269px;top:946px;width:17px;height:17px" viewBox="0 0 17 17"><ellipse cx="8.5" cy="6.3" rx="3.5" ry="4.5" fill="none" stroke="#2b1d38" stroke-width="1.45" stroke-linecap="round" stroke-linejoin="round"/><path d="M5.3 10.4H3.4Q0.8 10.4 0.8 13v1.9q0 1.3 1.3 1.3h12.8q1.3 0 1.3-1.3V13q0-2.6-2.6-2.6h-1.9" fill="none" stroke="#2b1d38" stroke-width="1.45" stroke-linecap="round" stroke-linejoin="round"/></svg>
<div class="abs" style="left:1309px;top:945px;width:5px;height:20px;background:#444674"></div>
<div class="abs" style="left:1317px;top:945px;width:5px;height:20px;background:#444674"></div>
<div class="abs" style="left:1325px;top:945px;width:5px;height:20px;background:#444674"></div>
<div class="abs" style="left:1333px;top:945px;width:5px;height:20px;background:#444674"></div>
<div class="abs" style="left:1341px;top:945px;width:5px;height:20px;background:#444674"></div>
<div class="abs" style="left:1349px;top:945px;width:5px;height:20px;background:#444674"></div>
<div class="abs" style="left:1357px;top:945px;width:5px;height:20px;background:#444674"></div>
<div class="abs" style="left:1365px;top:945px;width:5px;height:20px;background:#444674"></div>
<div class="abs" style="left:1373px;top:945px;width:5px;height:20px;background:#444674"></div>
<div class="abs" style="left:1381px;top:945px;width:5px;height:20px;background:#444674"></div>
<div class="abs" style="left:255px;top:975px;width:1148px;height:1px;background:#dcd7e2"></div>
<svg class="abs" style="left:274px;top:987px;width:16px;height:16px" viewBox="0 0 16 16"><polygon points="8.00,0.90 10.41,5.48 15.51,6.36 11.90,10.07 12.64,15.19 8.00,12.90 3.36,15.19 4.10,10.07 0.49,6.36 5.59,5.48" fill="#fcd02e" stroke="#fcd02e" stroke-width="1" stroke-linejoin="round"/></svg>
<div class="t" style="left:305.5px;top:985.80px;font-size:15px;line-height:20px;color:#3d74db;letter-spacing:0.912px;">/store/api_view_events</div>
<svg class="abs" style="left:677px;top:987px;width:16px;height:16px" viewBox="0 0 16 16"><path d="M7.8 0.5c-3.7 0-3.5 1.6-3.5 1.6v1.7h3.6v.5H2.9S0.5 4 0.5 7.8s2.1 3.6 2.1 3.6h1.3V9.6s-.1-2.1 2.1-2.1h3.6s2 0 2-2V2.5S11.9 0.5 7.8 0.5z" fill="#3775a9"/><path d="M8.2 15.5c3.7 0 3.5-1.6 3.5-1.6v-1.7H8.1v-.5h5s2.4.3 2.4-3.5-2.1-3.6-2.1-3.6h-1.3v1.8s.1 2.1-2.1 2.1H6.4s-2 0-2 2v3.3s-.3 1.7 3.8 1.7z" fill="#ffd43b"/></svg>
<div class="t" style="left:700.3px;top:985.80px;font-size:15px;line-height:20px;color:#2b1d38;letter-spacing:0.503px;">Palmatum</div>
<div class="t" style="left:444.50px;width:400px;text-align:right;top:985.80px;font-size:15px;line-height:20px;color:#2b1d38;">177</div>
<div class="t" style="left:530.90px;width:400px;text-align:right;top:985.80px;font-size:15px;line-height:20px;color:#2b1d38;letter-spacing:0.400px;">177ms</div>
<div class="t" style="left:607.20px;width:400px;text-align:right;top:985.80px;font-size:15px;line-height:20px;color:#2b1d38;letter-spacing:0.400px;">561ms</div>
<div class="t" style="left:708.50px;width:400px;text-align:right;top:985.80px;font-size:15px;line-height:20px;color:#2b1d38;">1.43%</div>
<div class="t" style="left:772.90px;width:400px;text-align:right;top:985.80px;font-size:15px;line-height:20px;color:#2b1d38;">0.73</div>
<div class="t" style="left:859.70px;width:400px;text-align:right;top:985.80px;font-size:15px;line-height:20px;color:#2b1d38;">235</div>
<svg class="abs" style="left:1269px;top:987px;width:17px;height:17px" viewBox="0 0 17 17"><ellipse cx="8.5" cy="6.3" rx="3.5" ry="4.5" fill="none" stroke="#2b1d38" stroke-width="1.45" stroke-linecap="round" stroke-linejoin="round"/><path d="M5.3 10.4H3.4Q0.8 10.4 0.8 13v1.9q0 1.3 1.3 1.3h12.8q1.3 0 1.3-1.3V13q0-2.6-2.6-2.6h-1.9" fill="none" stroke="#2b1d38" stroke-width="1.45" stroke-linecap="round" stroke-linejoin="round"/></svg>
<div class="abs" style="left:1309px;top:986px;width:5px;height:20px;background:#444674"></div>
<div class="abs" style="left:1317px;top:986px;width:5px;height:20px;background:#444674"></div>
<div class="abs" style="left:1325px;top:986px;width:5px;height:20px;background:#444674"></div>
<div class="abs" style="left:1333px;top:986px;width:5px;height:20px;background:#efedf2"></div>
<div class="abs" style="left:1341px;top:986px;width:5px;height:20px;background:#efedf2"></div>
<div class="abs" style="left:1349px;top:986px;width:5px;height:20px;background:#efedf2"></div>
<div class="abs" style="left:1357px;top:986px;width:5px;height:20px;background:#efedf2"></div>
<div class="abs" style="left:1365px;top:986px;width:5px;height:20px;background:#efedf2"></div>
<div class="abs" style="left:1373px;top:986px;width:5px;height:20px;background:#efedf2"></div>
<div class="abs" style="left:1381px;top:986px;width:5px;height:20px;background:#efedf2"></div>
<div class="abs" style="left:255px;top:1016px;width:1148px;height:1px;background:#dcd7e2"></div>
<svg class="abs" style="left:274px;top:1028px;width:16px;height:16px" viewBox="0 0 16 16"><polygon points="8.00,0.90 10.41,5.48 15.51,6.36 11.90,10.07 12.64,15.19 8.00,12.90 3.36,15.19 4.10,10.07 0.49,6.36 5.59,5.48" fill="none" stroke="#d6cfdd" stroke-width="1.2" stroke-linejoin="round"/></svg>
<div class="t" style="left:305.5px;top:1026.80px;font-size:15px;line-height:20px;color:#3d74db;letter-spacing:0.799px;">/empowerplant/login_page</div>
<svg class="abs" style="left:677px;top:1028px;width:16px;height:16px" viewBox="0 0 16 16"><path d="M0.5 1.5h3l4.5 7.8 4.5-7.8h3L8 14.5z" fill="#41b883"/><path d="M3.5 1.5h2.8L8 4.4l1.7-2.9h2.8L8 9.3z" fill="#34495e"/></svg>
<div class="t" style="left:700.3px;top:1026.80px;font-size:15px;line-height:20px;color:#2b1d38;letter-spacing:0.177px;">Chamise</div>
<div class="t" style="left:444.50px;width:400px;text-align:right;top:1026.80px;font-size:15px;line-height:20px;color:#2b1d38;">185</div>
<div class="t" style="left:530.90px;width:400px;text-align:right;top:1026.80px;font-size:15px;line-height:20px;color:#2b1d38;letter-spacing:0.400px;">185ms</div>
<div class="t" style="left:607.20px;width:400px;text-align:right;top:1026.80px;font-size:15px;line-height:20px;color:#2b1d38;letter-spacing:0.400px;">583ms</div>
<div class="t" style="left:708.50px;width:400px;text-align:right;top:1026.80px;font-size:15px;line-height:20px;color:#2b1d38;">2.23%</div>
<div class="t" style="left:772.90px;width:400px;text-align:right;top:1026.80px;font-size:15px;line-height:20px;color:#2b1d38;">0.62</div>
<div class="t" style="left:859.70px;width:400px;text-align:right;top:1026.80px;font-size:15px;line-height:20px;color:#2b1d38;">115</div>
<svg class="abs" style="left:1269px;top:1028px;width:17px;height:17px" viewBox="0 0 17 17"><ellipse cx="8.5" cy="6.3" rx="3.5" ry="4.5" fill="none" stroke="#2b1d38" stroke-width="1.45" stroke-linecap="round" stroke-linejoin="round"/><path d="M5.3 10.4H3.4Q0.8 10.4 0.8 13v1.9q0 1.3 1.3 1.3h12.8q1.3 0 1.3-1.3V13q0-2.6-2.6-2.6h-1.9" fill="none" stroke="#2b1d38" stroke-width="1.45" stroke-linecap="round" stroke-linejoin="round"/></svg>
<div class="abs" style="left:1309px;top:1027px;width:5px;height:20px;background:#444674"></div>
<div class="abs" style="left:1317px;top:1027px;width:5px;height:20px;background:#444674"></div>
<div class="abs" style="left:1325px;top:1027px;width:5px;height:20px;background:#444674"></div>
<div class="abs" style="left:1333px;top:1027px;width:5px;height:20px;background:#444674"></div>
<div class="abs" style="left:1341px;top:1027px;width:5px;height:20px;background:#444674"></div>
<div class="abs" style="left:1349px;top:1027px;width:5px;height:20px;background:#444674"></div>
<div class="abs" style="left:1357px;top:1027px;width:5px;height:20px;background:#efedf2"></div>
<div class="abs" style="left:1365px;top:1027px;width:5px;height:20px;background:#efedf2"></div>
<div class="abs" style="left:1373px;top:1027px;width:5px;height:20px;background:#efedf2"></div>
<div class="abs" style="left:1381px;top:1027px;width:5px;height:20px;background:#efedf2"></div>
<div class="abs" style="left:255px;top:1057px;width:1148px;height:1px;background:#dcd7e2"></div>
<svg class="abs" style="left:274px;top:1069px;width:16px;height:16px" viewBox="0 0 16 16"><polygon points="8.00,0.90 10.41,5.48 15.51,6.36 11.90,10.07 12.64,15.19 8.00,12.90 3.36,15.19 4.10,10.07 0.49,6.36 5.59,5.48" fill="none" stroke="#d6cfdd" stroke-width="1.2" stroke-linejoin="round"/></svg>
<div class="t" style="left:305.5px;top:1067.80px;font-size:15px;line-height:20px;color:#3d74db;letter-spacing:0.837px;">/docs/empowerplant/home</div>
<svg class="abs" style="left:677px;top:1069px;width:16px;height:16px" viewBox="0 0 16 16"><rect width="16" height="16" fill="#23203b"/><g fill="none" stroke="#5ec9e6" stroke-width="0.9"><ellipse cx="8" cy="8" rx="6.3" ry="2.5"/><ellipse cx="8" cy="8" rx="6.3" ry="2.5" transform="rotate(60 8 8)"/><ellipse cx="8" cy="8" rx="6.3" ry="2.5" transform="rotate(120 8 8)"/></g><circle cx="8" cy="8" r="1.2" fill="#5ec9e6"/></svg>
<div class="t" style="left:700.3px;top:1067.80px;font-size:15px;line-height:20px;color:#2b1d38;letter-spacing:0.350px;">Elderberry</div>
<div class="t" style="left:444.50px;width:400px;text-align:right;top:1067.80px;font-size:15px;line-height:20px;color:#2b1d38;">196</div>
<div class="t" style="left:530.90px;width:400px;text-align:right;top:1067.80px;font-size:15px;line-height:20px;color:#2b1d38;letter-spacing:0.400px;">196ms</div>
<div class="t" style="left:607.20px;width:400px;text-align:right;top:1067.80px;font-size:15px;line-height:20px;color:#2b1d38;letter-spacing:0.400px;">600ms</div>
<div class="t" style="left:708.50px;width:400px;text-align:right;top:1067.80px;font-size:15px;line-height:20px;color:#2b1d38;">0.93%</div>
<div class="t" style="left:772.90px;width:400px;text-align:right;top:1067.80px;font-size:15px;line-height:20px;color:#2b1d38;">0.81</div>
<div class="t" style="left:859.70px;width:400px;text-align:right;top:1067.80px;font-size:15px;line-height:20px;color:#2b1d38;">42</div>
<svg class="abs" style="left:1269px;top:1069px;width:17px;height:17px" viewBox="0 0 17 17"><ellipse cx="8.5" cy="6.3" rx="3.5" ry="4.5" fill="none" stroke="#2b1d38" stroke-width="1.45" stroke-linecap="round" stroke-linejoin="round"/><path d="M5.3 10.4H3.4Q0.8 10.4 0.8 13v1.9q0 1.3 1.3 1.3h12.8q1.3 0 1.3-1.3V13q0-2.6-2.6-2.6h-1.9" fill="none" stroke="#2b1d38" stroke-width="1.45" stroke-linecap="round" stroke-linejoin="round"/></svg>
<div class="abs" style="left:1309px;top:1068px;width:5px;height:20px;background:#444674"></div>
<div class="abs" style="left:1317px;top:1068px;width:5px;height:20px;background:#444674"></div>
<div class="abs" style="left:1325px;top:1068px;width:5px;height:20px;background:#444674"></div>
<div class="abs" style="left:1333px;top:1068px;width:5px;height:20px;background:#444674"></div>
<div class="abs" style="left:1341px;top:1068px;width:5px;height:20px;background:#efedf2"></div>
<div class="abs" style="left:1349px;top:1068px;width:5px;height:20px;background:#efedf2"></div>
<div class="abs" style="left:1357px;top:1068px;width:5px;height:20px;background:#efedf2"></div>
<div class="abs" style="left:1365px;top:1068px;width:5px;height:20px;background:#efedf2"></div>
<div class="abs" style="left:1373px;top:1068px;width:5px;height:20px;background:#efedf2"></div>
<div class="abs" style="left:1381px;top:1068px;width:5px;height:20px;background:#efedf2"></div>
<div class="abs" style="left:255px;top:1098px;width:1148px;height:1px;background:#dcd7e2"></div>
<svg class="abs" style="left:274px;top:1110px;width:16px;height:16px" viewBox="0 0 16 16"><polygon points="8.00,0.90 10.41,5.48 15.51,6.36 11.90,10.07 12.64,15.19 8.00,12.90 3.36,15.19 4.10,10.07 0.49,6.36 5.59,5.48" fill="none" stroke="#d6cfdd" stroke-width="1.2" stroke-linejoin="round"/></svg>
<div class="t" style="left:305.5px;top:1108.80px;font-size:15px;line-height:20px;color:#3d74db;letter-spacing:0.933px;">pytest.http</div>
<svg class="abs" style="left:674px;top:1106px;width:20px;height:20px" viewBox="0 0 20 20"><g fill="none" stroke="#2b1d38" stroke-linecap="round" stroke-width="1.5"><path d="M10.2 15L4.9 6.2M11.5 14.5L11.9 5.8M12.6 15.2L18.1 11.1M9.6 17.2L3.5 15.8"/></g><circle cx="4.9" cy="6.3" r="1.1" fill="#2b1d38"/><circle cx="11.9" cy="5.9" r="1.1" fill="#2b1d38"/><circle cx="18" cy="11.2" r="1.1" fill="#2b1d38"/><circle cx="3.6" cy="15.8" r="1.1" fill="#2b1d38"/><path d="M7.6 14.2Q11 12.6 15 14.2L13.8 18.6Q11.4 19.6 8.8 18.8Z" fill="#2b1d38"/></svg>
<div class="t" style="left:700.3px;top:1108.80px;font-size:15px;line-height:20px;color:#2b1d38;letter-spacing:0.513px;">Dicentra</div>
<div class="t" style="left:444.50px;width:400px;text-align:right;top:1108.80px;font-size:15px;line-height:20px;color:#2b1d38;">274</div>
<div class="t" style="left:530.90px;width:400px;text-align:right;top:1108.80px;font-size:15px;line-height:20px;color:#2b1d38;letter-spacing:0.400px;">274ms</div>
<div class="t" style="left:607.20px;width:400px;text-align:right;top:1108.80px;font-size:15px;line-height:20px;color:#2b1d38;letter-spacing:0.400px;">647ms</div>
<div class="t" style="left:708.50px;width:400px;text-align:right;top:1108.80px;font-size:15px;line-height:20px;color:#2b1d38;">0.33%</div>
<div class="t" style="left:772.90px;width:400px;text-align:right;top:1108.80px;font-size:15px;line-height:20px;color:#2b1d38;">0.88</div>
<div class="t" style="left:859.70px;width:400px;text-align:right;top:1108.80px;font-size:15px;line-height:20px;color:#2b1d38;">35</div>
<svg class="abs" style="left:1269px;top:1110px;width:17px;height:17px" viewBox="0 0 17 17"><ellipse cx="8.5" cy="6.3" rx="3.5" ry="4.5" fill="none" stroke="#2b1d38" stroke-width="1.45" stroke-linecap="round" stroke-linejoin="round"/><path d="M5.3 10.4H3.4Q0.8 10.4 0.8 13v1.9q0 1.3 1.3 1.3h12.8q1.3 0 1.3-1.3V13q0-2.6-2.6-2.6h-1.9" fill="none" stroke="#2b1d38" stroke-width="1.45" stroke-linecap="round" stroke-linejoin="round"/></svg>
<div class="abs" style="left:1309px;top:1109px;width:5px;height:20px;background:#444674"></div>
<div class="abs" style="left:1317px;top:1109px;width:5px;height:20px;background:#efedf2"></div>
<div class="abs" style="left:1325px;top:1109px;width:5px;height:20px;background:#efedf2"></div>
<div class="abs" style="left:1333px;top:1109px;width:5px;height:20px;background:#efedf2"></div>
<div class="abs" style="left:1341px;top:1109px;width:5px;height:20px;background:#efedf2"></div>
<div class="abs" style="left:1349px;top:1109px;width:5px;height:20px;background:#efedf2"></div>
<div class="abs" style="left:1357px;top:1109px;width:5px;height:20px;background:#efedf2"></div>
<div class="abs" style="left:1365px;top:1109px;width:5px;height:20px;background:#efedf2"></div>
<div class="abs" style="left:1373px;top:1109px;width:5px;height:20px;background:#efedf2"></div>
<div class="abs" style="left:1381px;top:1109px;width:5px;height:20px;background:#efedf2"></div>
<div class="abs" style="left:255px;top:1139px;width:1148px;height:1px;background:#dcd7e2"></div>
<svg class="abs" style="left:274px;top:1151px;width:16px;height:16px" viewBox="0 0 16 16"><polygon points="8.00,0.90 10.41,5.48 15.51,6.36 11.90,10.07 12.64,15.19 8.00,12.90 3.36,15.19 4.10,10.07 0.49,6.36 5.59,5.48" fill="none" stroke="#d6cfdd" stroke-width="1.2" stroke-linejoin="round"/></svg>
<div class="t" style="left:305.5px;top:1149.80px;font-size:15px;line-height:20px;color:#3d74db;letter-spacing:0.853px;">/empowerplant_tests/api</div>
<svg class="abs" style="left:674px;top:1147px;width:20px;height:20px" viewBox="0 0 20 20"><g fill="none" stroke="#2b1d38" stroke-linecap="round" stroke-width="1.5"><path d="M10.2 15L4.9 6.2M11.5 14.5L11.9 5.8M12.6 15.2L18.1 11.1M9.6 17.2L3.5 15.8"/></g><circle cx="4.9" cy="6.3" r="1.1" fill="#2b1d38"/><circle cx="11.9" cy="5.9" r="1.1" fill="#2b1d38"/><circle cx="18" cy="11.2" r="1.1" fill="#2b1d38"/><circle cx="3.6" cy="15.8" r="1.1" fill="#2b1d38"/><path d="M7.6 14.2Q11 12.6 15 14.2L13.8 18.6Q11.4 19.6 8.8 18.8Z" fill="#2b1d38"/></svg>
<div class="t" style="left:700.3px;top:1149.80px;font-size:15px;line-height:20px;color:#2b1d38;letter-spacing:0.513px;">Dicentra</div>
<div class="t" style="left:444.50px;width:400px;text-align:right;top:1149.80px;font-size:15px;line-height:20px;color:#2b1d38;">357</div>
<div class="t" style="left:530.90px;width:400px;text-align:right;top:1149.80px;font-size:15px;line-height:20px;color:#2b1d38;letter-spacing:0.400px;">357ms</div>
<div class="t" style="left:607.20px;width:400px;text-align:right;top:1149.80px;font-size:15px;line-height:20px;color:#2b1d38;letter-spacing:0.400px;">703ms</div>
<div class="t" style="left:708.50px;width:400px;text-align:right;top:1149.80px;font-size:15px;line-height:20px;color:#2b1d38;">1.23%</div>
<div class="t" style="left:772.90px;width:400px;text-align:right;top:1149.80px;font-size:15px;line-height:20px;color:#2b1d38;">0.91</div>
<div class="t" style="left:859.70px;width:400px;text-align:right;top:1149.80px;font-size:15px;line-height:20px;color:#2b1d38;">12</div>
<svg class="abs" style="left:1269px;top:1151px;width:17px;height:17px" viewBox="0 0 17 17"><ellipse cx="8.5" cy="6.3" rx="3.5" ry="4.5" fill="none" stroke="#2b1d38" stroke-width="1.45" stroke-linecap="round" stroke-linejoin="round"/><path d="M5.3 10.4H3.4Q0.8 10.4 0.8 13v1.9q0 1.3 1.3 1.3h12.8q1.3 0 1.3-1.3V13q0-2.6-2.6-2.6h-1.9" fill="none" stroke="#2b1d38" stroke-width="1.45" stroke-linecap="round" stroke-linejoin="round"/></svg>
<div class="abs" style="left:1309px;top:1150px;width:5px;height:20px;background:#efedf2"></div>
<div class="abs" style="left:1317px;top:1150px;width:5px;height:20px;background:#efedf2"></div>
<div class="abs" style="left:1325px;top:1150px;width:5px;height:20px;background:#efedf2"></div>
<div class="abs" style="left:1333px;top:1150px;width:5px;height:20px;background:#efedf2"></div>
<div class="abs" style="left:1341px;top:1150px;width:5px;height:20px;background:#efedf2"></div>
<div class="abs" style="left:1349px;top:1150px;width:5px;height:20px;background:#efedf2"></div>
<div class="abs" style="left:1357px;top:1150px;width:5px;height:20px;background:#efedf2"></div>
<div class="abs" style="left:1365px;top:1150px;width:5px;height:20px;background:#efedf2"></div>
<div class="abs" style="left:1373px;top:1150px;width:5px;height:20px;background:#efedf2"></div>
<div class="abs" style="left:1381px;top:1150px;width:5px;height:20px;background:#efedf2"></div>
<div class="abs" style="left:1324px;top:1198px;width:80px;height:30px;border:1px solid #c6becf;border-radius:4px;background:#fff;box-shadow:0 2px 0 rgba(0,0,0,.04);overflow:hidden"></div>
<div class="abs" style="left:1325px;top:1199px;width:39px;height:28px;background:#f7f6f9;border-radius:3px 0 0 3px"></div>
<div class="abs" style="left:1364px;top:1199px;width:1px;height:28px;background:#c6becf"></div>
<svg class="abs" style="left:1339px;top:1206px;width:10px;height:14px" viewBox="0 0 10 14"><path d="M8.5 1L2 7l6.5 6" fill="none" stroke="#776589" stroke-width="1.5" stroke-linecap="round" stroke-linejoin="round"/></svg>
<svg class="abs" style="left:1379px;top:1206px;width:10px;height:14px" viewBox="0 0 10 14"><path d="M1.5 1L8 7l-6.5 6" fill="none" stroke="#2b1d38" stroke-width="1.5" stroke-linecap="round" stroke-linejoin="round"/></svg>
</body></html>
